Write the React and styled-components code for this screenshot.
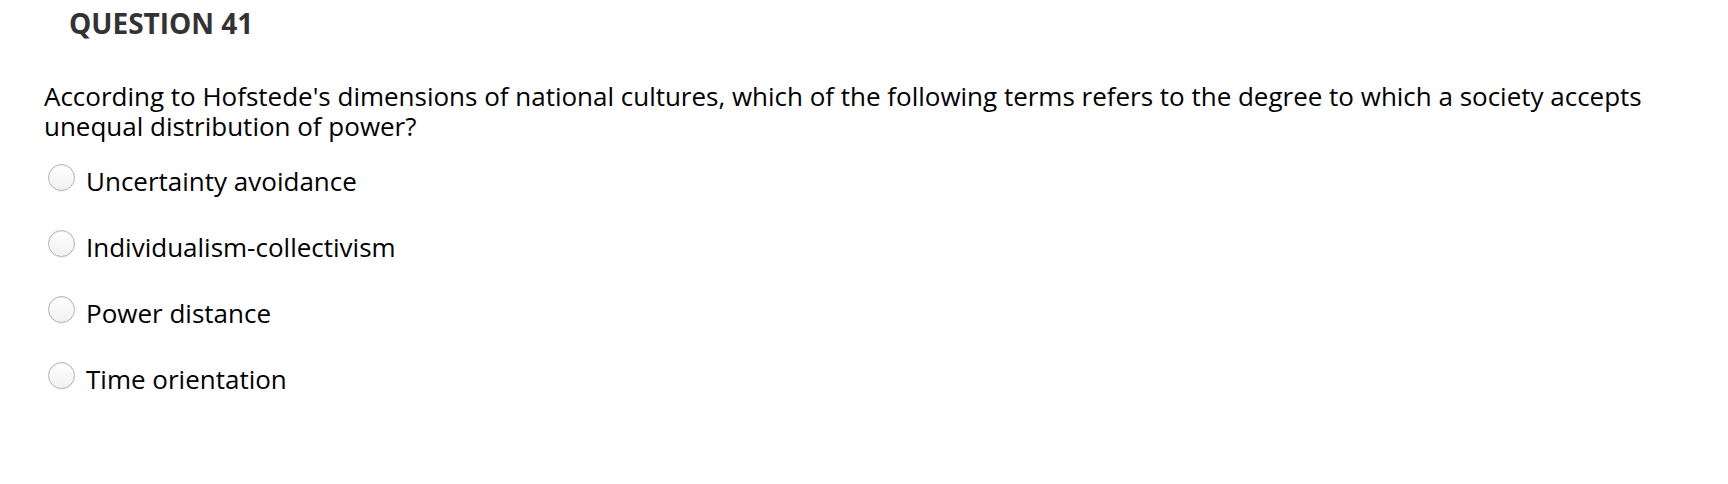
import React from 'react';
import styled, { createGlobalStyle } from 'styled-components';

const GlobalStyle = createGlobalStyle`
  body {
    margin: 0;
    background: #ffffff;
    font-family: 'Open Sans', 'Liberation Sans', sans-serif;
  }
`;

const Page = styled.div`
  padding: 4px 0 0 44px;
  width: 1728px;
  height: 484px;
  box-sizing: border-box;
  color: #000;
`;

const Heading = styled.h2`
  margin: 0 0 39px 25px;
  font-size: 28px;
  font-weight: 700;
  color: #333333;
`;

const Prompt = styled.p`
  margin: 0 0 25px 0;
  font-size: 26px;
  line-height: 30px;
  letter-spacing: -0.01px;
`;

const Options = styled.div`
  display: flex;
  flex-direction: column;
  gap: 36px;
`;

const Option = styled.label`
  display: flex;
  align-items: flex-start;
  gap: 11px;
  font-size: 26px;
  line-height: 30px;
  cursor: pointer;
`;

const Radio = styled.span`
  flex: none;
  width: 27px;
  height: 27px;
  margin: -2px 0 0 4px;
  border-radius: 50%;
  border: 1px solid #b4b4b4;
  box-sizing: border-box;
  background: linear-gradient(#ffffff, #f1f1f1);
  box-shadow: inset 0 1px 1px rgba(0, 0, 0, 0.08), 0 1px 1px rgba(0, 0, 0, 0.06);
`;

const choices = [
  'Uncertainty avoidance',
  'Individualism-collectivism',
  'Power distance',
  'Time orientation',
];

export default function App() {
  return (
    <Page>
      <GlobalStyle />
      <Heading>QUESTION 41</Heading>
      <Prompt>
        According to Hofstede's dimensions of national cultures, which of the
        following terms refers to the degree to which a society accepts
        <br />
        unequal distribution of power?
      </Prompt>
      <Options>
        {choices.map((c) => (
          <Option key={c}>
            <Radio />
            {c}
          </Option>
        ))}
      </Options>
    </Page>
  );
}
